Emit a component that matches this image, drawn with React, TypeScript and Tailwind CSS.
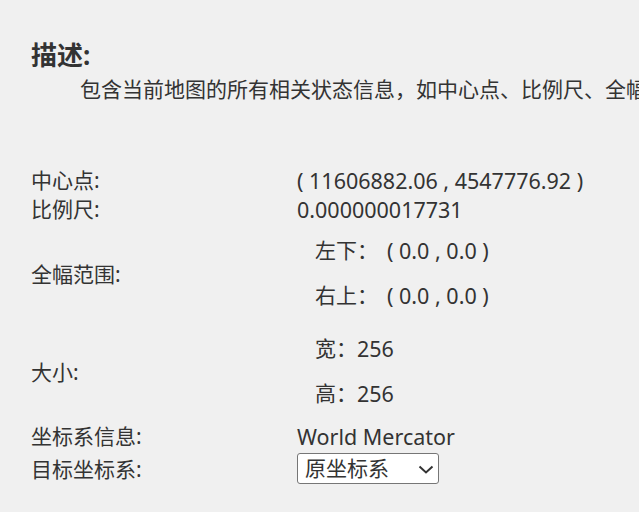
import React from "react";

const font = {
  fontFamily: '"Noto Sans", "Noto Sans CJK SC", sans-serif',
};

const Label = ({ children }: { children: React.ReactNode }) => (
  <div className="flex items-center text-[21px] leading-none">{children}</div>
);

const SubRow = ({ label, value, gap }: { label: string; value: string; gap?: boolean }) => (
  <div className="flex h-[45px] items-center pl-[18px] text-[21px] leading-none">
    <span>{label}：</span>
    <span className={gap ? "ml-[9px] text-[21.5px]" : "text-[21.5px]"}>{value}</span>
  </div>
);

export default function App() {
  return (
    <div
      className="min-h-screen w-[639px] overflow-hidden bg-[#f0f0f0] pl-[31px] pt-[37px] text-[#333]"
      style={font}
    >
      <h3 className="text-[26px] font-bold leading-[36px] text-[#333]">描述:</h3>
      <p className="mt-[1px] overflow-hidden whitespace-nowrap pl-[49px] text-[21px] leading-[30px]">
        包含当前地图的所有相关状态信息，如中心点、比例尺、全幅范围、大小、坐标系信息等。
      </p>

      <div className="mt-[62px] grid grid-cols-[266px_1fr]">
        <Label>中心点:</Label>
        <div className="flex h-[29px] items-center text-[21.5px] leading-none">
          ( 11606882.06 , 4547776.92 )
        </div>

        <Label>比例尺:</Label>
        <div className="flex h-[29px] items-center text-[21.5px] leading-none">
          0.000000017731
        </div>

        <div className="flex items-center pt-[2px] text-[21px] leading-none">全幅范围:</div>
        <div className="py-[4px]">
          <SubRow label="左下" value="( 0.0 , 0.0 )" gap />
          <SubRow label="右上" value="( 0.0 , 0.0 )" gap />
        </div>

        <div className="flex items-center pt-[2px] text-[21px] leading-none">大小:</div>
        <div className="py-[4px]">
          <SubRow label="宽" value="256" />
          <SubRow label="高" value="256" />
        </div>

        <Label>坐标系信息:</Label>
        <div className="flex h-[33px] items-center text-[21.5px] leading-none">
          World Mercator
        </div>

        <Label>目标坐标系:</Label>
        <div className="flex h-[32px] items-start">
          <div className="relative">
            <select
              className="h-[31px] w-[142px] appearance-none rounded-[3px] border border-[#767676] bg-white pl-[7px] text-[21px] leading-none text-[#333] outline-none"
              style={font}
              defaultValue="src"
            >
              <option value="src">原坐标系</option>
              <option value="wgs84">WGS84</option>
              <option value="merc">Web Mercator</option>
            </select>
            <svg
              className="pointer-events-none absolute right-[5px] top-[12px]"
              width="16"
              height="9"
              viewBox="0 0 16 9"
              fill="none"
            >
              <path d="M1.5 1.5 L8 7.5 L14.5 1.5" stroke="#333" strokeWidth="2" />
            </svg>
          </div>
        </div>
      </div>
    </div>
  );
}
